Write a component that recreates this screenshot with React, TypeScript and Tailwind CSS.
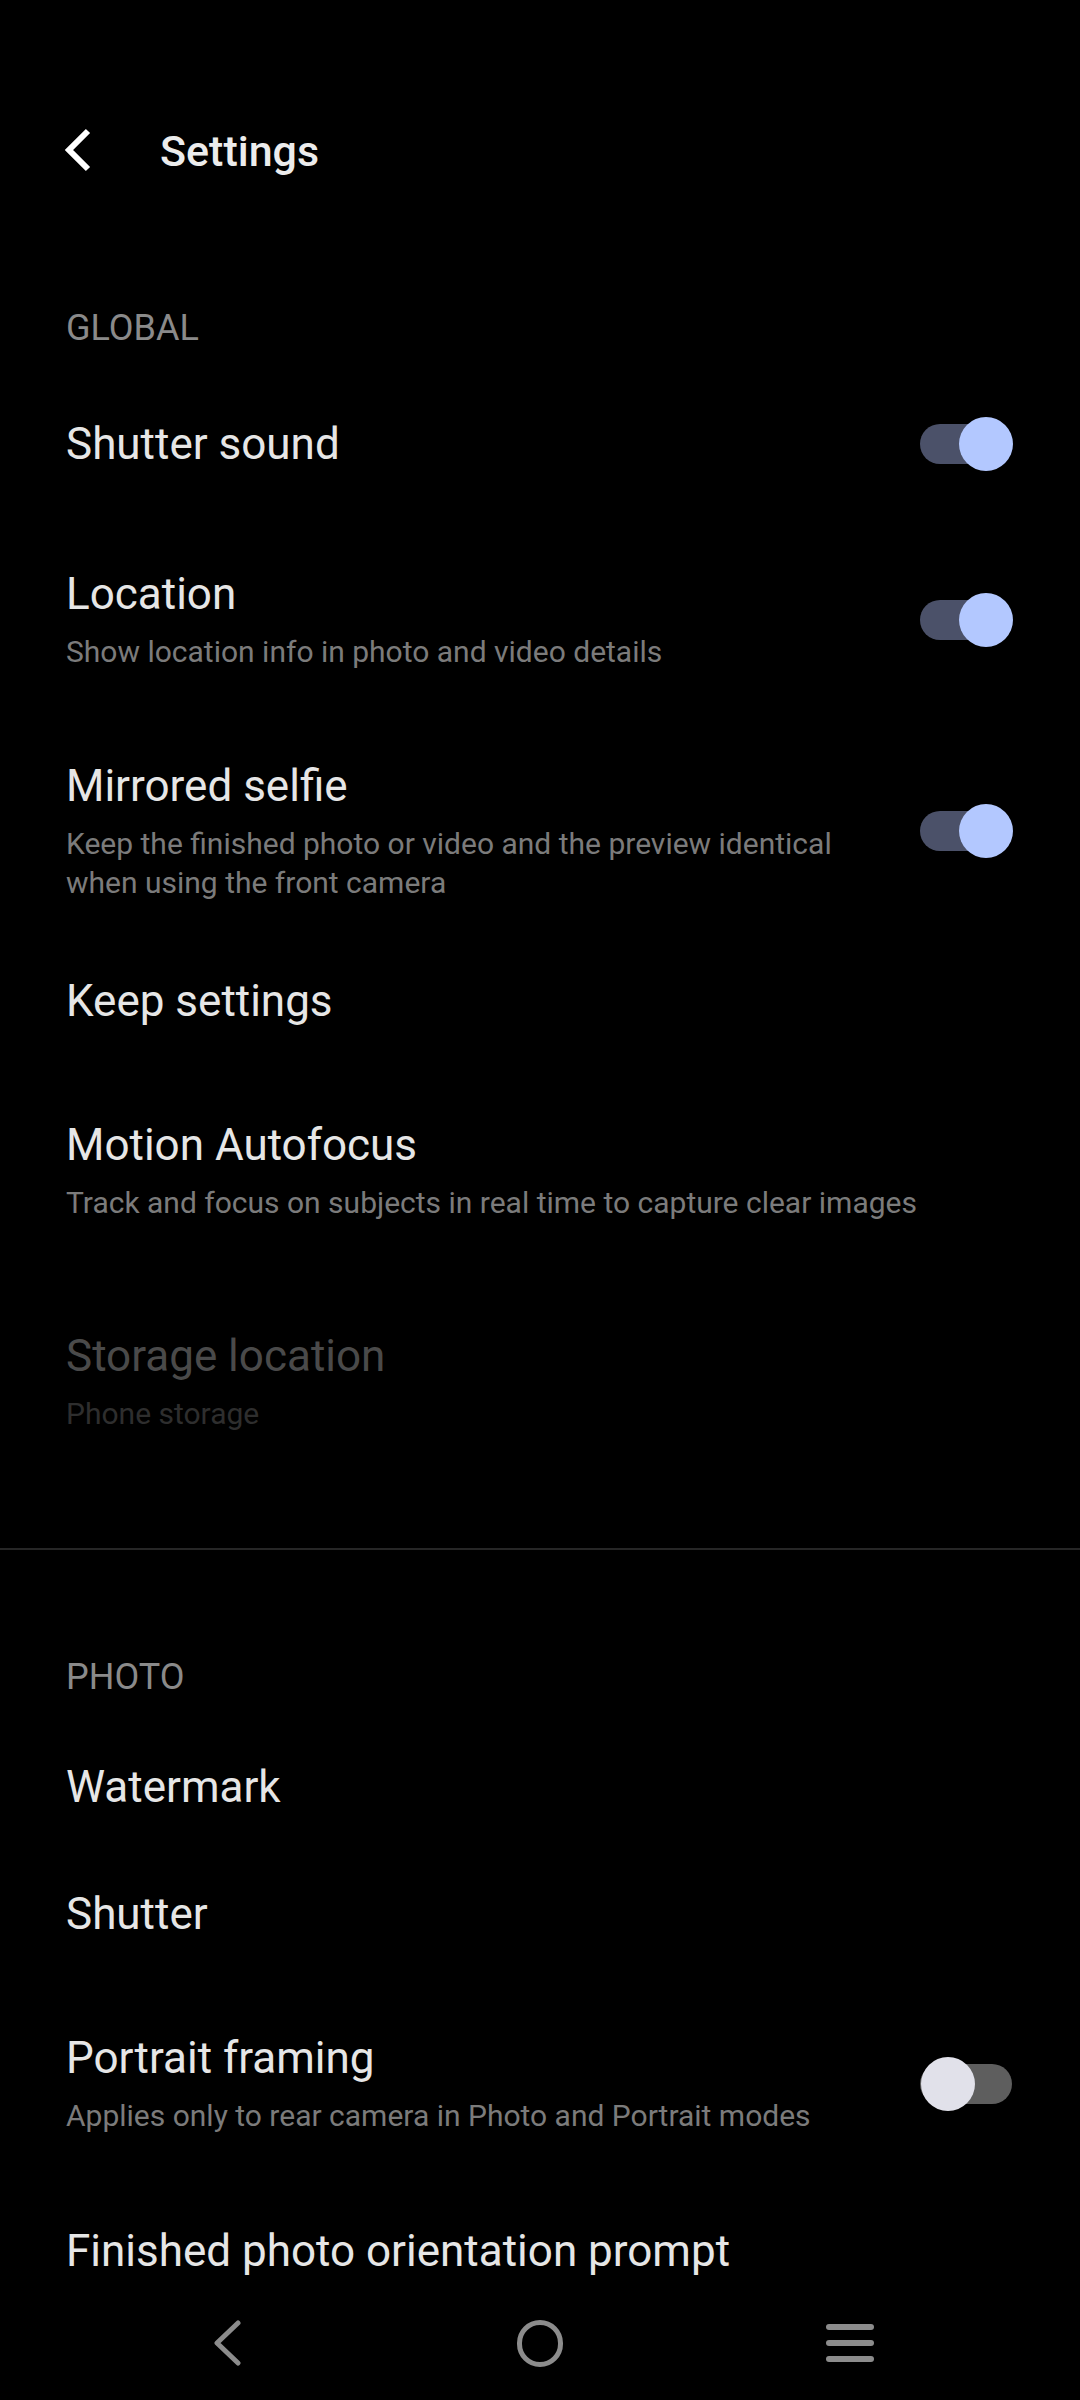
import React from "react";

type ToggleState = "on" | "off";

function Toggle({ state }: { state: ToggleState }) {
  const on = state === "on";
  return (
    <div className="relative w-[93px] h-[54px] shrink-0">
      <div
        className={
          on
            ? "absolute left-0 top-[7px] w-[92px] h-[40px] rounded-full bg-[#4b5169]"
            : "absolute left-0 top-[7px] w-[92px] h-[40px] rounded-full bg-[#5e5e5e]"
        }
      />
      <div
        className={
          on
            ? "absolute left-[39px] top-0 w-[54px] h-[54px] rounded-full bg-[#b3c8ff]"
            : "absolute left-[1px] top-0 w-[54px] h-[54px] rounded-full bg-[#e1e1ea]"
        }
      />
    </div>
  );
}

function Row({
  title,
  sub,
  toggle,
  className,
  dim,
}: {
  title: string;
  sub?: React.ReactNode;
  toggle?: ToggleState;
  className: string;
  dim?: boolean;
}) {
  return (
    <div className={"flex items-center pl-[66px] pr-[67px] gap-[40px] " + className}>
      <div className="flex-1 min-w-0">
        <div
          className={
            dim
              ? "text-[44px] leading-[52px] text-[#4a4a4a] whitespace-nowrap"
              : "text-[44px] leading-[52px] text-[#e6e6e6] whitespace-nowrap"
          }
        >
          {title}
        </div>
        {sub ? (
          <div
            className={
              dim
                ? "mt-[12px] text-[30px] leading-[39px] text-[#2e2e2e]"
                : "mt-[12px] text-[30px] leading-[39px] text-[#7b7b7b]"
            }
          >
            {sub}
          </div>
        ) : null}
      </div>
      {toggle ? <Toggle state={toggle} /> : null}
    </div>
  );
}

export default function App() {
  return (
    <div
      className="w-[1080px] h-[2400px] bg-black flex flex-col overflow-hidden"
      style={{ fontFamily: "Roboto, 'Noto Sans', sans-serif" }}
    >
      <div className="flex-1 overflow-hidden">
        {/* Header */}
        <div className="flex items-center h-[50px] mt-[126px] pl-[62px]">
          <svg width="30" height="46" viewBox="0 0 30 46" className="-mt-[3px]">
            <path d="M26 4 L7 23 L26 42" fill="none" stroke="#ffffff" strokeWidth="6" />
          </svg>
          <span className="ml-[68px] text-[43px] leading-[50px] font-medium text-[#ececec]">
            Settings
          </span>
        </div>

        {/* GLOBAL */}
        <div className="mt-[132px] pl-[66px] text-[36px] leading-[40px] text-[#8a8a8a]">GLOBAL</div>

        <Row className="mt-[69px]" title="Shutter sound" toggle="on" />
        <Row
          className="mt-[97px]"
          title="Location"
          sub="Show location info in photo and video details"
          toggle="on"
        />
        <Row
          className="mt-[89px]"
          title="Mirrored selfie"
          sub={
            <>
              Keep the finished photo or video and the preview identical
              <br />
              when using the front camera
            </>
          }
          toggle="on"
        />
        <Row className="mt-[73px]" title="Keep settings" />
        <Row
          className="mt-[92px]"
          title="Motion Autofocus"
          sub="Track and focus on subjects in real time to capture clear images"
        />
        <Row className="mt-[108px]" title="Storage location" sub="Phone storage" dim />

        <div className="mt-[115px] h-[2px] bg-[#262626]" />

        <div className="mt-[107px] pl-[66px] text-[36px] leading-[40px] text-[#8a8a8a]">PHOTO</div>

        <Row className="mt-[64px]" title="Watermark" />
        <Row className="mt-[75px]" title="Shutter" />
        <Row
          className="mt-[92px]"
          title="Portrait framing"
          sub="Applies only to rear camera in Photo and Portrait modes"
          toggle="off"
        />
        <Row className="mt-[90px]" title="Finished photo orientation prompt" />
      </div>

      {/* Navigation bar */}
      <div className="h-[114px] shrink-0 bg-black flex items-center">
        <div className="ml-[177px] w-[100px] flex justify-center">
          <svg width="32" height="46" viewBox="0 0 32 46">
            <path
              d="M27 3 L6 23 L27 43"
              fill="none"
              stroke="#8c8c8c"
              strokeWidth="5"
              strokeLinecap="round"
              strokeLinejoin="round"
            />
          </svg>
        </div>
        <div className="ml-[213px] w-[100px] flex justify-center">
          <div className="w-[46px] h-[47px] rounded-full border-[5px] border-[#8c8c8c]" />
        </div>
        <div className="ml-[210px] w-[100px] flex justify-center">
          <div className="flex flex-col gap-[10px] w-[48px]">
            <div className="h-[6px] rounded-full bg-[#8c8c8c]" />
            <div className="h-[6px] rounded-full bg-[#8c8c8c]" />
            <div className="h-[6px] rounded-full bg-[#8c8c8c]" />
          </div>
        </div>
      </div>
    </div>
  );
}
